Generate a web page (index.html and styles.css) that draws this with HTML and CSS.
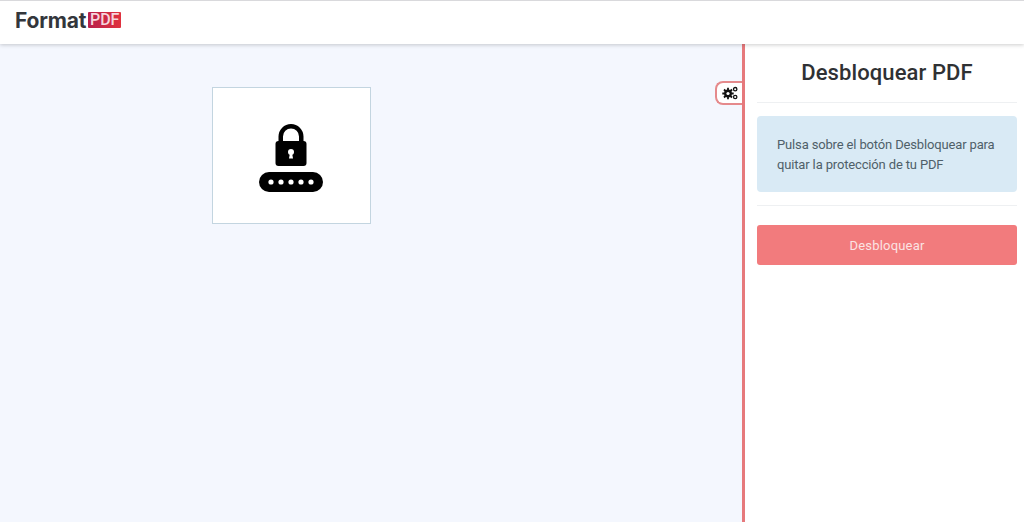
FILE: index.html
```html
<!DOCTYPE html>
<html lang="es">
<head>
  <meta charset="UTF-8" />
  <title>Desbloquear PDF</title>
  <link rel="stylesheet" href="styles.css">
</head>
<body>
  <header class="site-header">
    <div class="logo">
      <span class="logo-word">Format</span>
      <span class="logo-pdf">PDF</span>
    </div>
  </header>

  <div class="main">
    <section class="canvas">
      <div class="thumb">
        <svg class="lock-icon" viewBox="0 0 64 68" width="64" height="68">
          <path d="M19.500 20V12.500a12.500 12.500 0 0 1 25 0V20h-4.500V12.500a8 8 0 0 0-16 0V20z" fill="#000"/>
          <rect x="16.500" y="17" width="31" height="25" rx="3" fill="#000"/>
          <circle cx="32" cy="28" r="3" fill="#fff"/>
          <path d="M31 29h2l1 5.500h-4z" fill="#fff"/>
          <rect x="0" y="48" width="64" height="20" rx="10" fill="#000"/>
          <circle cx="12" cy="58" r="2.600" fill="#fff"/>
          <circle cx="22" cy="58" r="2.600" fill="#fff"/>
          <circle cx="32" cy="58" r="2.600" fill="#fff"/>
          <circle cx="42" cy="58" r="2.600" fill="#fff"/>
          <circle cx="52" cy="58" r="2.600" fill="#fff"/>
        </svg>
      </div>
      <button class="options-tab" aria-label="Opciones">
        <svg viewBox="0 0 16 14" width="16" height="14">
          <circle cx="6" cy="7.500" r="3.900" fill="#111"/>
          <path d="M6 1.800v11.400M.3 7.500h11.400M2 3.500l8 8M10 3.500l-8 8" stroke="#111" stroke-width="1.800"/>
          <circle cx="6" cy="7.500" r="1.600" fill="#fff"/>
          <circle cx="13.200" cy="3.200" r="1.700" fill="none" stroke="#111" stroke-width="1.300"/>
          <circle cx="13.200" cy="11" r="1.700" fill="none" stroke="#111" stroke-width="1.300"/>
        </svg>
      </button>
    </section>

    <aside class="sidebar">
      <h1 class="sidebar-title">Desbloquear PDF</h1>
      <div class="notice">Pulsa sobre el botón Desbloquear para quitar la protección de tu PDF</div>
      <div class="action">
        <button class="unlock-btn">Desbloquear</button>
      </div>
    </aside>
  </div>
</body>
</html>
```

FILE: styles.css
```css
* { margin: 0; padding: 0; box-sizing: border-box; }
html, body { height: 100%; }
body {
  font-family: Roboto, "Liberation Sans", sans-serif;
  background: #fff;
  color: #333;
  overflow: hidden;
  display: flex;
  flex-direction: column;
}
.site-header {
  height: 44px;
  flex: none;
  background: #fff;
  border-top: 1px solid #d9d9dc;
  box-shadow: 0 1px 4px rgba(0, 0, 0, 0.2);
  padding: 11px 0 0 15px;
  position: relative;
  z-index: 5;
}
.logo {
  display: flex;
  align-items: center;
  gap: 2px;
  height: 17px;
}
.logo-word {
  font-family: Inter, Roboto, sans-serif;
  font-size: 21px;
  font-weight: 700;
  color: #33363b;
  letter-spacing: -0.2px;
}
.logo-pdf {
  background: linear-gradient(90deg, #b71f4b, #e0323f);
  color: #f6d5dc;
  font-size: 16px;
  font-weight: 500;
  line-height: 16px;
  width: 33px;
  height: 16px;
  margin-top: -1px;
  text-align: center;
  border-radius: 1px;
}
.main {
  flex: 1;
  display: flex;
  min-height: 0;
}
.canvas {
  width: 742px;
  flex: none;
  background: #f4f7fe;
  padding: 43px 0 0 212px;
  position: relative;
}
.thumb {
  width: 159px;
  height: 137px;
  background: #fff;
  border: 1px solid #c3d5e0;
  display: flex;
  justify-content: center;
  padding: 36px 1px 0 0;
}
.lock-icon { display: block; }
.options-tab {
  position: absolute;
  top: 37px;
  right: 0;
  width: 27px;
  height: 24px;
  background: #fff;
  border: 2px solid #e58a8c;
  border-right: none;
  border-radius: 8px 0 0 8px;
  display: flex;
  align-items: center;
  justify-content: center;
}
.sidebar {
  flex: 1;
  background: #fff;
  border-left: 3px solid #e6797c;
  padding: 0 7px 0 12px;
}
.sidebar-title {
  font-size: 22px;
  font-weight: 500;
  line-height: 26px;
  text-align: center;
  color: #2f3134;
  letter-spacing: 0.1px;
  padding: 16px 0 16px;
  border-bottom: 1px solid #eef0f2;
  margin-bottom: 13px;
}
.notice {
  background: #d9eaf5;
  border-radius: 4px;
  height: 76px;
  padding: 19px 10px 19px 20px;
  font-size: 13px;
  line-height: 20px;
  color: #4f5f69;
  letter-spacing: -0.15px;
}
.action {
  margin-top: 13px;
  border-top: 1px solid #eef0f2;
  padding-top: 19px;
}
.unlock-btn {
  display: block;
  width: 100%;
  height: 40px;
  background: #f27b7d;
  border: none;
  border-radius: 3px;
  color: #fbe3e3;
  font-family: inherit;
  font-size: 13px;
  font-weight: 400;
  letter-spacing: 0.2px;
}
```
